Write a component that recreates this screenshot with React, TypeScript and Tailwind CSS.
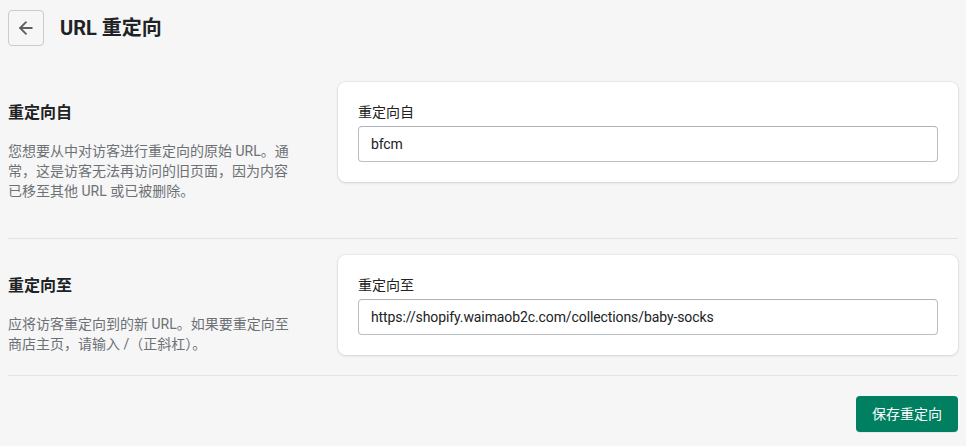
import { ArrowLeft } from 'lucide-react';

const font = { fontFamily: 'Roboto, "Noto Sans CJK SC", sans-serif' };

function Field({ label, value }: { label: string; value: string }) {
  return (
    <div className="rounded-lg bg-white p-5 shadow-[0_0_0_1px_rgba(63,63,68,0.05),0_1px_3px_0_rgba(63,63,68,0.15)]">
      <label className="block text-sm leading-5 text-[#202223]">{label}</label>
      <div className="mt-1 flex h-9 items-center rounded border border-[#babfc3] border-t-[#aeb4b9] bg-white px-3">
        <input
          defaultValue={value}
          className="w-full bg-transparent text-sm tracking-[-0.1px] text-[#202223] outline-none"
        />
      </div>
    </div>
  );
}

function Section({
  title,
  desc,
  children,
  className,
}: {
  title: string;
  desc: string;
  children: React.ReactNode;
  className: string;
}) {
  return (
    <section className={`flex border-b border-[#e1e3e5] ${className}`}>
      <div className="w-[330px] shrink-0 pt-[19px]">
        <h2 className="text-base font-bold leading-6 text-[#202223]">{title}</h2>
        <p className="mt-4 max-w-[290px] text-sm leading-5 text-[#6d7175]">{desc}</p>
      </div>
      <div className="flex-1">{children}</div>
    </section>
  );
}

export default function App() {
  return (
    <div style={font} className="min-h-[446px] bg-[#f6f6f7] px-2 pt-[10px]">
      <header className="flex items-center gap-4">
        <button className="flex h-9 w-9 items-center justify-center rounded border border-[#c9cccf] text-[#5c5f62]">
          <ArrowLeft size={20} strokeWidth={2.2} />
        </button>
        <h1 className="text-xl font-bold text-[#202223]">URL 重定向</h1>
      </header>

      <Section
        className="pt-9 pb-[37px]"
        title="重定向自"
        desc="您想要从中对访客进行重定向的原始 URL。通常，这是访客无法再访问的旧页面，因为内容已移至其他 URL 或已被删除。"
      >
        <Field label="重定向自" value="bfcm" />
      </Section>

      <Section
        className="pt-4 pb-5"
        title="重定向至"
        desc="应将访客重定向到的新 URL。如果要重定向至商店主页，请输入 /（正斜杠）。"
      >
        <Field label="重定向至" value="https://shopify.waimaob2c.com/collections/baby-socks" />
      </Section>

      <div className="flex justify-end pt-5">
        <button className="h-9 rounded bg-[#008060] px-4 text-sm text-white shadow-[0_1px_0_rgba(0,0,0,0.05)]">
          保存重定向
        </button>
      </div>
    </div>
  );
}
